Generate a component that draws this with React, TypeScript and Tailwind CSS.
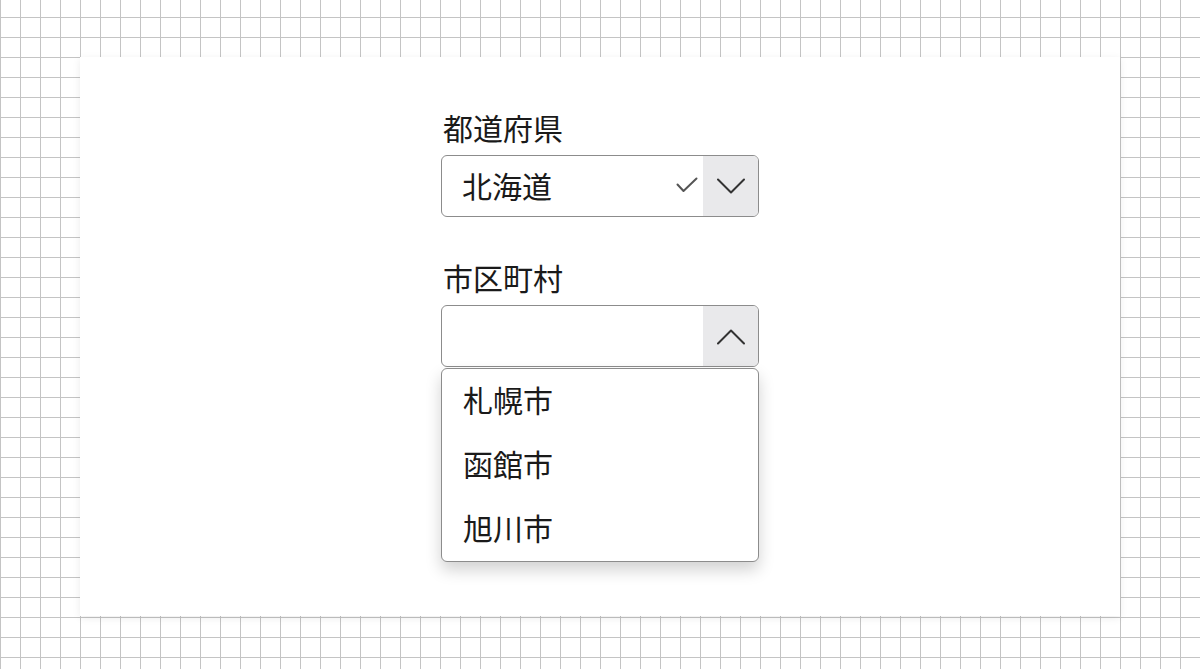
import { useState } from 'react'

const jp = { fontFamily: '"Noto Sans CJK JP", "Noto Sans", sans-serif' }

function Chevron({ up }: { up?: boolean }) {
  return (
    <svg width="28" height="16" viewBox="0 0 28 16" fill="none" stroke="#333" strokeWidth="2" strokeLinecap="round" strokeLinejoin="round">
      {up ? <path d="M1 14.5 L14 1.5 L27 14.5" /> : <path d="M1 1.5 L14 14.5 L27 1.5" />}
    </svg>
  )
}

export default function App() {
  const [pref] = useState('北海道')
  const cities = ['札幌市', '函館市', '旭川市']

  return (
    <div
      className="w-full h-[669px] bg-white pt-[57px] px-[80px] bg-[linear-gradient(to_right,#c4c4c4_1.5px,transparent_1.5px),linear-gradient(to_bottom,#c4c4c4_1.5px,transparent_1.5px)] bg-[size:20px_20px] bg-[position:0px_17px]"
      style={jp}
    >
      <div className="h-[559px] bg-white shadow-[0_2px_8px_rgba(0,0,0,0.08)] flex justify-center pt-[52px]">
        <div className="w-[318px] flex flex-col text-[#1a1a1a]">
          <label className="text-[30px] leading-[36px] pl-[2px]">都道府県</label>
          <div className="mt-[10px] h-[62px] flex border border-[#8c8c8c] rounded-[6px] overflow-hidden">
            <div className="flex-1 flex items-center pl-[20px] pr-[5px] pb-[2px] text-[30px]">
              <span className="flex-1">{pref}</span>
              <svg width="22" height="16" viewBox="0 0 22 16" fill="none" stroke="#555" strokeWidth="2" strokeLinecap="round" strokeLinejoin="round">
                <path d="M1.5 7.5 L7.5 14 L20.5 1.5" />
              </svg>
            </div>
            <div className="w-[55px] bg-[#e9e9eb] flex items-center justify-center">
              <Chevron />
            </div>
          </div>

          <label className="mt-[42px] text-[30px] leading-[36px] pl-[2px]">市区町村</label>
          <div className="relative mt-[10px]">
            <div className="h-[62px] flex border border-[#8c8c8c] rounded-[6px] overflow-hidden">
              <div className="flex-1" />
              <div className="w-[55px] bg-[#e9e9eb] flex items-center justify-center pt-[2px]">
                <Chevron up />
              </div>
            </div>
            <ul className="absolute left-0 right-0 top-[63px] bg-white border border-[#8c8c8c] rounded-[6px] shadow-[0_8px_16px_rgba(0,0,0,0.18)]">
              {cities.map(c => (
                <li key={c} className="h-[64px] flex items-center pl-[21px] pb-[3px] text-[30px]">
                  {c}
                </li>
              ))}
            </ul>
          </div>
        </div>
      </div>
    </div>
  )
}
